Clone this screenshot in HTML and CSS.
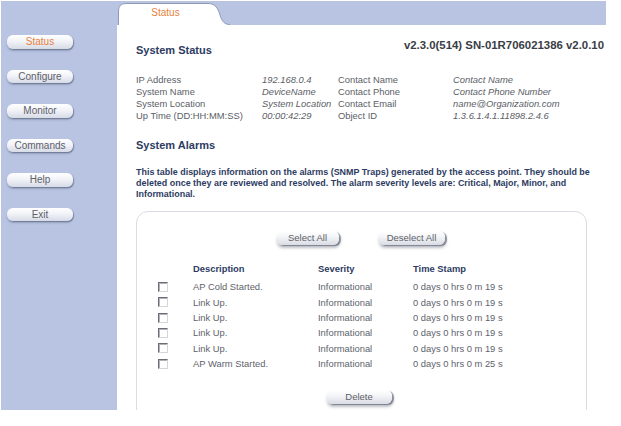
FILE: index.html
```html
<!DOCTYPE html>
<html>
<head>
<meta charset="utf-8">
<link rel="stylesheet" href="styles.css">
</head>
<body>
<div class="page">
  <nav class="sidebar">
    <div class="navbtn active">Status</div>
    <div class="navbtn">Configure</div>
    <div class="navbtn">Monitor</div>
    <div class="navbtn">Commands</div>
    <div class="navbtn">Help</div>
    <div class="navbtn">Exit</div>
  </nav>
  <div class="main">
    <div class="tabbar">
      <div class="tab">
        <svg class="tab-shape" width="112" height="22" viewBox="0 0 112 22">
          <path d="M0.5,22 L0.5,8 Q0.5,0.5 8,0.5 L90,0.5 C98,0.5 100,6 102,12 C104,19 107,21.5 112,21.5 L112,22 Z" fill="#ffffff"/>
          <path d="M0.5,22 L0.5,8 Q0.5,0.5 8,0.5 L90,0.5 C98,0.5 100,6 102,12 C104,19 107,21.5 112,21.5" fill="none" stroke="#8e9ab8" stroke-width="1"/>
        </svg>
        <span class="tab-label">Status</span>
      </div>
    </div>
    <div class="content">
      <div class="head">
        <h1 class="title">System Status</h1>
        <div class="version">v2.3.0(514) SN-01R706021386 v2.0.10</div>
      </div>
      <div class="info">
        <span>IP Address</span><i>192.168.0.4</i><span>Contact Name</span><i>Contact Name</i>
        <span>System Name</span><i>DeviceName</i><span>Contact Phone</span><i>Contact Phone Number</i>
        <span>System Location</span><i>System Location</i><span>Contact Email</span><i>name@Organization.com</i>
        <span>Up Time (DD:HH:MM:SS)</span><i>00:00:42:29</i><span>Object ID</span><i>1.3.6.1.4.1.11898.2.4.6</i>
      </div>
      <h2 class="subtitle">System Alarms</h2>
      <p class="desc">This table displays information on the alarms (SNMP Traps) generated by the access point. They should be deleted once they are reviewed and resolved. The alarm severity levels are: Critical, Major, Minor, and Informational.</p>
      <div class="panel">
        <div class="actions">
          <div class="btn w63">Select All</div>
          <div class="btn w67">Deselect All</div>
        </div>
        <div class="alarms">
          <span class="hd"></span><b class="hd">Description</b><b class="hd">Severity</b><b class="hd">Time Stamp</b>
          <span class="cb"></span><span>AP Cold Started.</span><span>Informational</span><span>0 days 0 hrs 0 m 19 s</span>
          <span class="cb"></span><span>Link Up.</span><span>Informational</span><span>0 days 0 hrs 0 m 19 s</span>
          <span class="cb"></span><span>Link Up.</span><span>Informational</span><span>0 days 0 hrs 0 m 19 s</span>
          <span class="cb"></span><span>Link Up.</span><span>Informational</span><span>0 days 0 hrs 0 m 19 s</span>
          <span class="cb"></span><span>Link Up.</span><span>Informational</span><span>0 days 0 hrs 0 m 19 s</span>
          <span class="cb"></span><span>AP Warm Started.</span><span>Informational</span><span>0 days 0 hrs 0 m 25 s</span>
        </div>
        <div class="actions foot">
          <div class="btn w66">Delete</div>
        </div>
      </div>
    </div>
  </div>
</div>
</body>
</html>
```

FILE: styles.css
```css
html, body {
  margin: 0;
  padding: 0;
  background: #ffffff;
}
body {
  font-family: "Liberation Sans", Arial, sans-serif;
  color: #5b5e66;
}
.page {
  display: flex;
  padding: 1px 0 0 1px;
  height: 409px;
  overflow: hidden;
}
.sidebar {
  width: 116px;
  height: 409px;
  background: #b8c4e1;
  box-sizing: border-box;
  padding: 34px 0 0 6px;
  display: flex;
  flex-direction: column;
  gap: 21px;
  flex-shrink: 0;
}
.navbtn {
  width: 66px;
  height: 13.5px;
  box-sizing: border-box;
  border-radius: 6px;
  background: linear-gradient(#ffffff 0%, #f1f3f8 45%, #d7dbe6 100%);
  box-shadow: 1px 1px 1px rgba(60, 70, 100, 0.45), 0 2px 2px rgba(60, 70, 100, 0.25);
  font-size: 10px;
  line-height: 13.5px;
  text-align: center;
  color: #5d6068;
}
.navbtn.active {
  color: #e8823c;
}
.main {
  width: 489px;
  flex-shrink: 0;
  display: flex;
  flex-direction: column;
}
.tabbar {
  height: 24px;
  background: #b8c4e1;
  box-sizing: border-box;
  padding: 2px 0 0 1px;
  display: flex;
}
.tab {
  position: relative;
  width: 112px;
  height: 22px;
}
.tab-shape {
  position: absolute;
  left: 0;
  top: 0;
}
.tab-label {
  position: relative;
  display: block;
  width: 95px;
  text-align: center;
  font-size: 10px;
  line-height: 20px;
  color: #e8823c;
}
.content {
  padding: 0 2px 0 19px;
}
.head {
  display: flex;
  justify-content: space-between;
  align-items: flex-start;
  height: 32px;
}
.title {
  margin: 18px 0 0 0;
  font-size: 11px;
  line-height: 14px;
  font-weight: bold;
  color: #2d3b62;
}
.version {
  margin-top: 13px;
  font-size: 11.4px;
  line-height: 14px;
  font-weight: bold;
  color: #3a3d45;
}
.info {
  margin-top: 17px;
  display: grid;
  grid-template-columns: 126px 76px 115px auto;
  font-size: 9.4px;
  line-height: 12px;
  color: #5b5e66;
}
.info span, .info i {
  white-space: nowrap;
}
.subtitle {
  margin: 16px 0 0 0;
  font-size: 11px;
  line-height: 14px;
  font-weight: bold;
  color: #2d3b62;
}
.desc {
  margin: 15px 0 0 0;
  width: 460px;
  font-size: 8.95px;
  line-height: 11px;
  font-weight: bold;
  color: #2d3b62;
}
.panel {
  margin-top: 11px;
  width: 451px;
  height: 240px;
  box-sizing: border-box;
  border: 1px solid #d9dce2;
  border-radius: 12px;
  padding-top: 19px;
}
.actions {
  display: flex;
  justify-content: center;
  gap: 39px;
  padding-right: 2px;
}
.actions.foot {
  margin-top: 19px;
  padding-right: 5px;
}
.btn {
  height: 14px;
  box-sizing: border-box;
  border-radius: 6px;
  background: linear-gradient(#ffffff 0%, #f4f5f8 40%, #d9dce4 100%);
  box-shadow: 2px 1px 1px rgba(70, 75, 95, 0.55), 1px 3px 3px rgba(70, 75, 95, 0.35);
  font-size: 9.5px;
  line-height: 14px;
  text-align: center;
  color: #5d6068;
}
.w63 { width: 63px; }
.w67 { width: 67px; }
.w66 { width: 66px; }
.alarms {
  margin-top: 19px;
  padding-left: 21px;
  display: grid;
  grid-template-columns: 35px 125px 95px auto;
  grid-auto-rows: 15.35px;
  align-items: center;
  font-size: 9.4px;
  line-height: 15.35px;
  color: #60636b;
}
.alarms b {
  color: #2d3b62;
  font-weight: bold;
}
.alarms .hd {
  margin-bottom: 7px;
}
.cb {
  width: 10px;
  height: 10px;
  box-sizing: border-box;
  border-top: 1px solid #6a6d73;
  border-left: 1px solid #6a6d73;
  border-right: 1px solid #d4d6da;
  border-bottom: 1px solid #d4d6da;
  background: #ffffff;
  box-shadow: inset 1px 1px 0 #b0b3b9;
}
```
